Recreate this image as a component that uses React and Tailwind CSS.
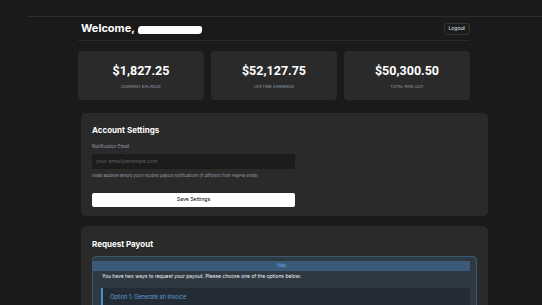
import React from 'react';

const stats = [
  { value: '$1,827.25', label: 'Current Balance' },
  { value: '$52,127.75', label: 'Lifetime Earnings' },
  { value: '$50,300.50', label: 'Total Paid Out' },
];

export default function App() {
  return (
    <div
      className="min-h-[305px] h-[305px] overflow-hidden bg-[#1a1a1a] text-white"
      style={{ fontFamily: 'Inter, "Noto Sans", sans-serif' }}
    >
      {/* top strip */}
      <div className="h-[17px] ml-[27px] border-b border-[#2c2c2c]" />

      <div className="ml-[78px] w-[392px]">
        {/* header */}
        <div className="flex items-center justify-between h-[24px] border-b border-[#2a2a2a] pl-[3px]">
          <div className="flex items-center gap-[3px]">
            <h1 className="text-[11px] font-bold leading-none">Welcome,</h1>
            <div className="w-[64px] h-[8px] bg-white rounded-[3px] -skew-x-6 mt-[2px]" />
          </div>
          <button className="h-[12px] px-[4px] text-[5px] leading-none rounded-[3px] border border-[#333] bg-[#1c1c1c] text-gray-200">
            Logout
          </button>
        </div>

        {/* stats */}
        <div className="grid grid-cols-3 gap-[7px] mt-[10px]">
          {stats.map((s) => (
            <div
              key={s.label}
              className="h-[49px] rounded-[4px] bg-[#2a2a2a] flex flex-col items-center justify-center"
            >
              <div
                className="text-[12.5px] font-bold leading-none mt-[3px]"
                style={{ fontFamily: 'Roboto, sans-serif' }}
              >
                {s.value}
              </div>
              <div className="text-[4.1px] uppercase text-gray-400 mt-[7px] leading-none">
                {s.label}
              </div>
            </div>
          ))}
        </div>
      </div>

      {/* account settings */}
      <div className="ml-[81px] w-[407px] mt-[13px] rounded-[5px] bg-[#2a2a2a] px-[11px] pt-[13px] h-[103px]">
        <h2 className="text-[8px] font-bold leading-none">Account Settings</h2>
        <div className="text-[4.5px] text-gray-400 mt-[11px] leading-none">Notification Email</div>
        <div className="w-[203px] h-[15px] mt-[4px] rounded-[2px] bg-[#1c1c1c] flex items-center px-[4px]">
          <span className="text-[5px] text-[#5f5f5f] leading-none">your-email@example.com</span>
        </div>
        <div className="text-[4.1px] text-gray-400 mt-[5px] leading-none">
          Email address where you'll receive payout notifications (if different from PayPal email)
        </div>
        <button className="w-[203px] h-[14px] mt-[15px] rounded-[2px] bg-white text-black text-[5.2px] leading-none">
          Save Settings
        </button>
      </div>

      {/* request payout */}
      <div className="ml-[81px] w-[407px] mt-[10px] rounded-[5px] bg-[#2a2a2a] px-[11px] pt-[14px] h-[120px]">
        <h2 className="text-[8px] font-bold leading-none">Request Payout</h2>
        <div className="mt-[8px] rounded-[4px] border border-[#3c5a74] bg-[#2e3942] pr-[6px] h-[80px]">
          <div className="h-[10px] mt-[4px] bg-[#3a5a78] rounded-[1px] flex items-center justify-center">
            <span className="text-[4.2px] text-[#6cb4f0] leading-none">Hide</span>
          </div>
          <div className="pl-[9px] mt-[3px] text-[5px] text-gray-100 leading-none">
            You have two ways to request your payout. Please choose one of the options below:
          </div>
          <div className="ml-[8px] mt-[9px] bg-[#232c34] border-l-2 border-[#4a8ccc] h-[40px] pl-[7px] pt-[7px]">
            <div className="text-[5.5px] text-[#5e9fd6] leading-none">Option 1: Generate an Invoice</div>
          </div>
        </div>
      </div>
    </div>
  );
}
